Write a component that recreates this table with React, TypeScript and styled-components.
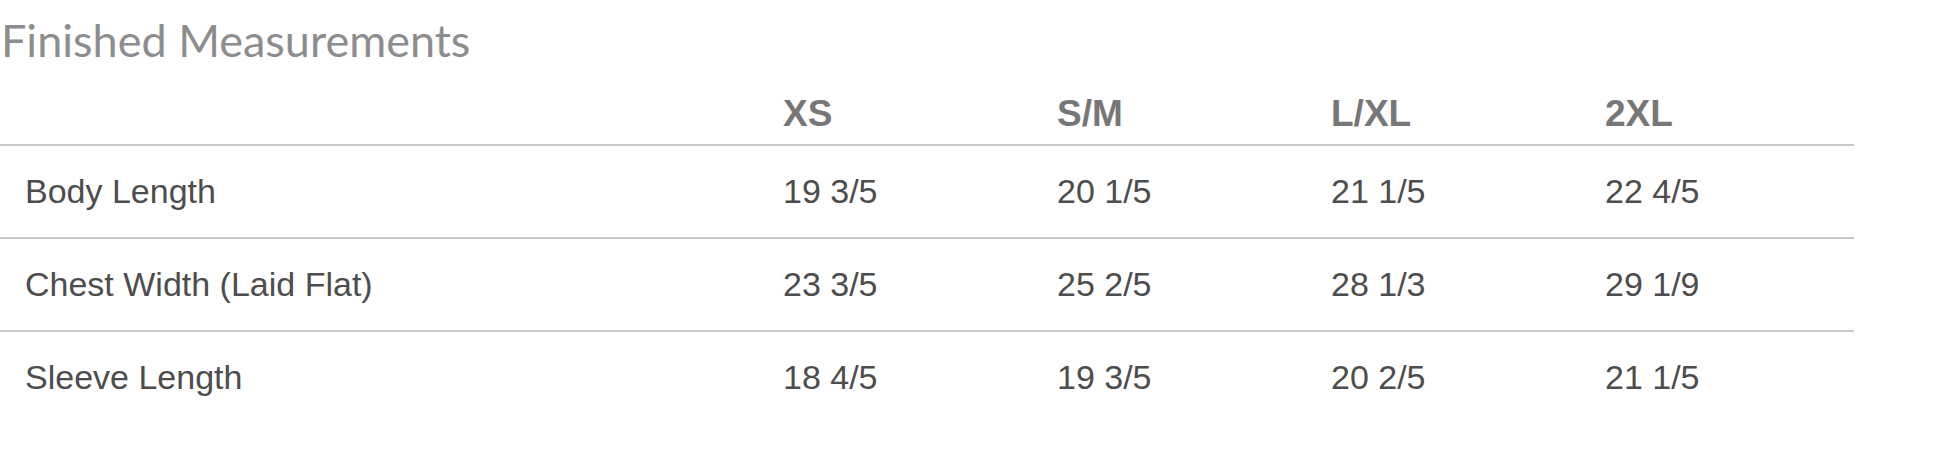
import React from "react";
import styled, { createGlobalStyle } from "styled-components";

const GlobalStyle = createGlobalStyle`
  html, body {
    margin: 0;
    padding: 0;
    background: #ffffff;
  }
  body {
    font-family: "Liberation Sans", Arial, sans-serif;
  }
`;

const Page = styled.div`
  width: 1946px;
  height: 462px;
  overflow: hidden;
  background: #ffffff;
`;

const Title = styled.h2`
  margin: 18px 0 0 1px;
  font-family: Lato, "Open Sans", sans-serif;
  font-weight: 400;
  font-size: 45px;
  line-height: 44px;
  color: #8d8d8d;
  letter-spacing: 0;
`;

const Table = styled.div`
  width: 1854px;
  display: grid;
  grid-template-columns: 758px repeat(4, 1fr);
`;

const Row = styled.div<{ $last?: boolean }>`
  display: contents;
  & > * {
    border-bottom: ${(p) => (p.$last ? "none" : "2px solid #c9c9c9")};
  }
`;

const HeadCell = styled.div`
  padding: 33px 25px 12px;
  font-size: 37px;
  line-height: 37px;
  font-weight: 700;
  color: #777777;
`;

const Cell = styled.div`
  height: 91px;
  display: flex;
  align-items: center;
  padding: 0 25px;
  font-size: 34px;
  color: #4d4d4d;
`;

const sizes = ["XS", "S/M", "L/XL", "2XL"];

const rows: { label: string; values: string[] }[] = [
  { label: "Body Length", values: ["19 3/5", "20 1/5", "21 1/5", "22 4/5"] },
  { label: "Chest Width (Laid Flat)", values: ["23 3/5", "25 2/5", "28 1/3", "29 1/9"] },
  { label: "Sleeve Length", values: ["18 4/5", "19 3/5", "20 2/5", "21 1/5"] },
];

export default function App() {
  return (
    <Page>
      <GlobalStyle />
      <Title>Finished Measurements</Title>
      <Table>
        <Row>
          <HeadCell />
          {sizes.map((s) => (
            <HeadCell key={s}>{s}</HeadCell>
          ))}
        </Row>
        {rows.map((r, i) => (
          <Row key={r.label} $last={i === rows.length - 1}>
            <Cell>{r.label}</Cell>
            {r.values.map((v, j) => (
              <Cell key={j}>{v}</Cell>
            ))}
          </Row>
        ))}
      </Table>
    </Page>
  );
}
